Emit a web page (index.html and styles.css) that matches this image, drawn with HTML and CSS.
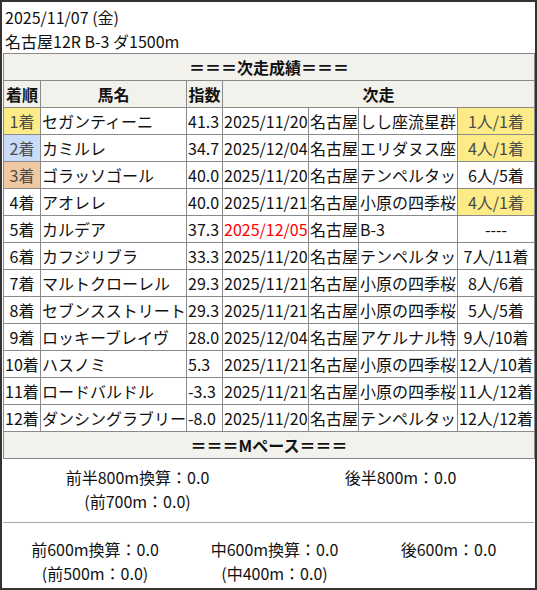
FILE: index.html
```html
<!DOCTYPE html>
<html lang="ja">
<head>
<meta charset="utf-8">
<title>次走成績</title>
<link rel="stylesheet" href="styles.css">
</head>
<body>
<div class="frame">
  <div class="race-head">
    <div>2025/11/07 (金)</div>
    <div>名古屋12R B-3 ダ1500m</div>
  </div>
  <table class="results">
    <colgroup>
      <col class="c-rank"><col class="c-name"><col class="c-idx"><col class="c-date"><col class="c-venue"><col class="c-race"><col class="c-res">
    </colgroup>
    <tr class="section"><th colspan="7">＝＝＝次走成績＝＝＝</th></tr>
    <tr class="head"><th>着順</th><th>馬名</th><th>指数</th><th colspan="4">次走</th></tr>
    <tr><td class="rank gold">1着</td><td>セガンティーニ</td><td>41.3</td><td>2025/11/20</td><td>名古屋</td><td>しし座流星群</td><td class="res gold">1人/1着</td></tr>
    <tr><td class="rank silver">2着</td><td>カミルレ</td><td>34.7</td><td>2025/12/04</td><td>名古屋</td><td>エリダヌス座</td><td class="res gold">4人/1着</td></tr>
    <tr><td class="rank bronze">3着</td><td>ゴラッソゴール</td><td>40.0</td><td>2025/11/20</td><td>名古屋</td><td>テンペルタッ</td><td class="res">6人/5着</td></tr>
    <tr><td class="rank">4着</td><td>アオレレ</td><td>40.0</td><td>2025/11/21</td><td>名古屋</td><td>小原の四季桜</td><td class="res gold">4人/1着</td></tr>
    <tr><td class="rank">5着</td><td>カルデア</td><td>37.3</td><td class="future">2025/12/05</td><td>名古屋</td><td>B-3</td><td class="res">----</td></tr>
    <tr><td class="rank">6着</td><td>カフジリブラ</td><td>33.3</td><td>2025/11/20</td><td>名古屋</td><td>テンペルタッ</td><td class="res">7人/11着</td></tr>
    <tr><td class="rank">7着</td><td>マルトクローレル</td><td>29.3</td><td>2025/11/21</td><td>名古屋</td><td>小原の四季桜</td><td class="res">8人/6着</td></tr>
    <tr><td class="rank">8着</td><td>セブンスストリート</td><td>29.3</td><td>2025/11/21</td><td>名古屋</td><td>小原の四季桜</td><td class="res">5人/5着</td></tr>
    <tr><td class="rank">9着</td><td>ロッキーブレイヴ</td><td>28.0</td><td>2025/12/04</td><td>名古屋</td><td>アケルナル特</td><td class="res">9人/10着</td></tr>
    <tr><td class="rank">10着</td><td>ハスノミ</td><td>5.3</td><td>2025/11/21</td><td>名古屋</td><td>小原の四季桜</td><td class="res">12人/10着</td></tr>
    <tr><td class="rank">11着</td><td>ロードバルドル</td><td>-3.3</td><td>2025/11/21</td><td>名古屋</td><td>小原の四季桜</td><td class="res">11人/12着</td></tr>
    <tr><td class="rank">12着</td><td>ダンシングラブリー</td><td>-8.0</td><td>2025/11/20</td><td>名古屋</td><td>テンペルタッ</td><td class="res">12人/12着</td></tr>
    <tr class="section"><th colspan="7">＝＝＝Mペース＝＝＝</th></tr>
  </table>
  <div class="pace">
    <div class="pace-row halves">
      <div class="pace-item"><div>前半800m換算：0.0</div><div>(前700m：0.0)</div></div>
      <div class="pace-item"><div>後半800m：0.0</div></div>
    </div>
    <div class="pace-row thirds">
      <div class="pace-item"><div>前600m換算：0.0</div><div>(前500m：0.0)</div></div>
      <div class="pace-item"><div>中600m換算：0.0</div><div>(中400m：0.0)</div></div>
      <div class="pace-item"><div>後600m：0.0</div></div>
    </div>
  </div>
</div>
</body>
</html>
```
FILE: styles.css
```css
* { box-sizing: border-box; }
html, body { margin: 0; padding: 0; background: #fff; }
body {
  font-family: "Noto Sans CJK JP", "Noto Sans", sans-serif;
  font-size: 16px;
  color: #111;
}
.frame {
  width: 537px;
  height: 590px;
  border: 2px solid #333;
  background: #fff;
  overflow: hidden;
}
.race-head {
  padding: 3px 3px 0;
  line-height: 24px;
}
.results {
  width: 532px;
  border-collapse: collapse;
  table-layout: fixed;
  margin-left: 1px;
}
.c-rank { width: 37px; }
.c-name { width: 146px; }
.c-idx { width: 36px; }
.c-date { width: 86px; }
.c-venue { width: 50px; }
.c-race { width: 99px; }
.results th, .results td {
  border: 1px solid #8a8a8a;
  padding: 0 1px;
  height: 27px;
  line-height: 26px;
  white-space: nowrap;
  overflow: hidden;
  text-align: left;
  font-weight: normal;
}
.results th {
  background: #f2f1ec;
  font-weight: bold;
  text-align: center;
}
.results td.rank, .results td.res { text-align: center; padding: 0; }
.results td.gold { background: #fdeb88; color: #4a4a4a; }
.results td.silver { background: #c9dbf7; color: #4a4a4a; }
.results td.bronze { background: #f0c9a2; color: #4a4a4a; }
.results td.future { color: #f00; }
.pace {
  line-height: 24px;
}
.pace-row { display: grid; text-align: center; }
.halves {
  grid-template-columns: 1fr 1fr;
  padding: 6px 2px 9px 3px;
  border-bottom: 1px solid #a8a8a8;
  margin: 0 1px;
}
.thirds {
  grid-template-columns: 184px 175px 1fr;
  padding: 14px 0 0 1px;
}
```
